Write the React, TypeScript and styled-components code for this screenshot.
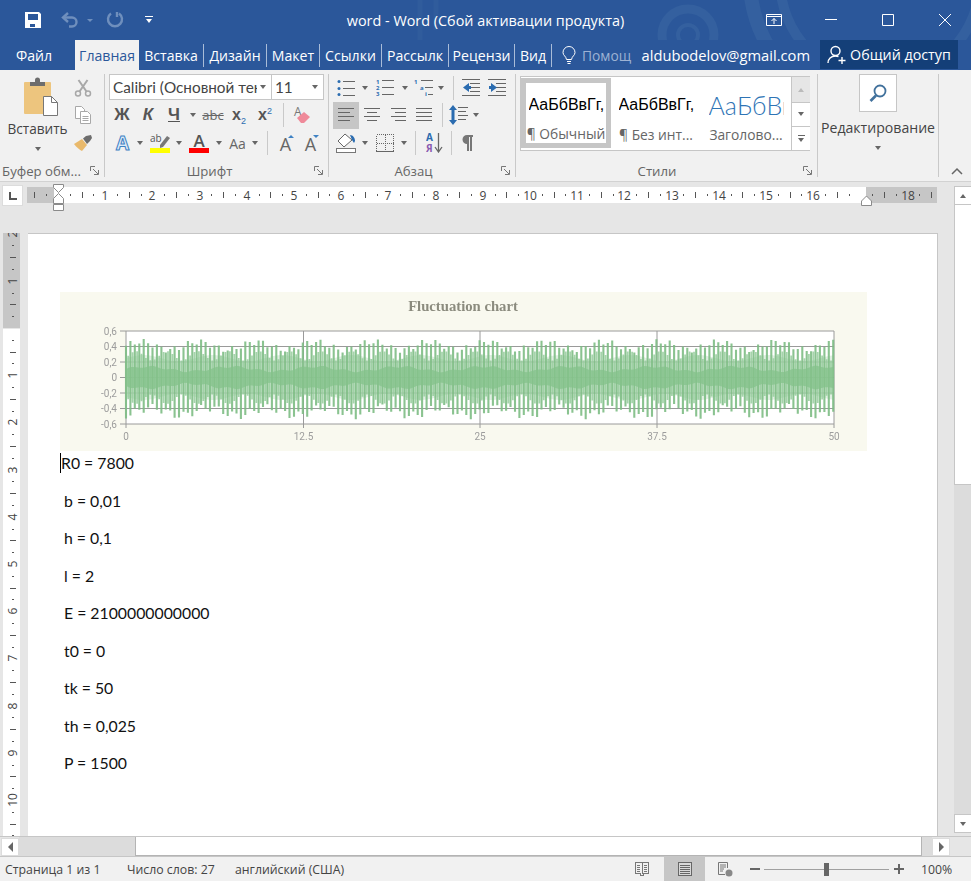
import React from 'react'
import styled, { createGlobalStyle } from 'styled-components'

const GlobalStyle = createGlobalStyle`
    html, body {
        margin: 0;
        padding: 0;
        height: 100%;
        overflow: hidden;
    }
    body {
        font-family: 'Open Sans', 'Noto Sans', sans-serif;
    }
`

const Root = styled.div`
    width: 971px;
    height: 881px;
    display: flex;
    flex-direction: column;
    overflow: hidden;
    background: #e6e6e6;
`

/* ---------- title bar ---------- */

const TitleBar = styled.div`
    position: relative;
    height: 40px;
    flex: none;
    display: grid;
    grid-template-columns: 1fr auto 1fr;
    align-items: center;
    background: #2b579a;
    color: #fff;
`
const Decoration = styled.svg`
    position: absolute;
    left: 0;
    top: 0;
    width: 971px;
    height: 70px;
    pointer-events: none;
`
const QuickBar = styled.div`
    position: relative;
    display: flex;
    align-items: center;
    padding-left: 20px;
    height: 40px;
`
const QuickCell = styled.div<{ $w: number; $ml?: number }>`
    width: ${p => p.$w}px;
    margin-left: ${p => p.$ml || 0}px;
    display: flex;
    align-items: center;
    justify-content: center;
`
const DimArrow = styled.span`
    border-left: 3px solid transparent;
    border-right: 3px solid transparent;
    border-top: 3px solid #6f8fbd;
`
const DocTitle = styled.div`
    position: relative;
    font-size: 14.4px;
    white-space: nowrap;
`
const WindowButtons = styled.div`
    position: relative;
    display: flex;
    justify-content: flex-end;
    margin-right: -2px;
`
const WindowButton = styled.div`
    width: 57px;
    height: 40px;
    display: flex;
    align-items: center;
    justify-content: center;
`

/* ---------- tabs ---------- */

const TabBar = styled.div`
    position: relative;
    height: 30px;
    flex: none;
    display: flex;
    align-items: stretch;
    background: #2b579a;
    color: #fff;
    font-size: 14.1px;
`
const Tab = styled.div<{ $w: number; $active?: boolean }>`
    position: relative;
    width: ${p => p.$w}px;
    display: flex;
    align-items: center;
    justify-content: center;
    white-space: nowrap;
    background: ${p => (p.$active ? '#f1f1f1' : 'transparent')};
    color: ${p => (p.$active ? '#2b579a' : '#fff')};
`
const TabSep = styled.div`
    position: relative;
    width: 1px;
    height: 23px;
    align-self: center;
    background: #a9bcd8;
`
const Help = styled.div`
    position: relative;
    display: flex;
    align-items: center;
    gap: 6px;
    margin-left: 10px;
    font-size: 13.8px;
    color: #9db2d3;
`
const Email = styled.div`
    position: relative;
    display: flex;
    align-items: center;
    margin-left: auto;
    margin-right: 10px;
    font-size: 14.7px;
`
const ShareButton = styled.div`
    position: relative;
    width: 138px;
    margin-right: 13px;
    margin-bottom: 1px;
    display: flex;
    align-items: center;
    justify-content: center;
    gap: 3px;
    font-size: 14.3px;
    background: #143f78;
    white-space: nowrap;
`

/* ---------- ribbon ---------- */

const Ribbon = styled.div`
    position: relative;
    height: 112px;
    flex: none;
    box-sizing: border-box;
    display: flex;
    padding: 4px 0 4px;
    background: #f1f1f1;
    border-bottom: 1px solid #d2d2d2;
    color: #444;
    font-size: 13px;
`
const Group = styled.div<{ $w: number; $pl?: number }>`
    position: relative;
    width: ${p => p.$w}px;
    box-sizing: border-box;
    display: flex;
    flex-direction: column;
    padding-left: ${p => p.$pl || 0}px;
    border-right: 1px solid #c9c9c9;
`
const GroupBody = styled.div`
    flex: 1;
    display: flex;
    min-height: 0;
`
const Rows = styled.div`
    display: flex;
    flex-direction: column;
`
const GroupLabel = styled.div<{ $pr?: number }>`
    height: 12px;
    padding-right: ${p => p.$pr || 0}px;
    display: flex;
    align-items: center;
    justify-content: center;
    font-size: 13.2px;
    color: #666;
    white-space: nowrap;
`
const Launcher = styled.svg`
    position: absolute;
    right: 5px;
    bottom: 2px;
    width: 9px;
    height: 9px;
`
const PasteColumn = styled.div`
    width: 71px;
    display: flex;
    flex-direction: column;
    align-items: center;
    padding-left: 4px;
    box-sizing: border-box;
`
const PasteGlyph = styled.div`
    display: flex;
    margin: 3px 0 0 7px;
`
const PasteText = styled.div`
    margin-top: 2px;
    font-size: 13.6px;
    color: #444;
`
const SmallColumn = styled.div`
    width: 24px;
    display: flex;
    flex-direction: column;
`
const ToolRow = styled.div<{ $h?: number; $ml?: number }>`
    height: ${p => p.$h || 28}px;
    margin-left: ${p => p.$ml || 0}px;
    display: flex;
    align-items: center;
`
const Cell = styled.div<{ $w: number; $on?: boolean }>`
    width: ${p => p.$w}px;
    height: 27px;
    flex: none;
    display: flex;
    align-items: center;
    justify-content: center;
    background: ${p => (p.$on ? '#c6c6c6' : 'transparent')};
    color: #555;
`
const Caret = styled.span<{ $mt?: number }>`
    margin-top: ${p => p.$mt || 0}px;
    border-left: 3.5px solid transparent;
    border-right: 3.5px solid transparent;
    border-top: 4px solid #666;
`
const RowSep = styled.div<{ $w: number }>`
    width: ${p => p.$w}px;
    flex: none;
    display: flex;
    justify-content: center;
    &::before {
        content: '';
        width: 1px;
        height: 24px;
        background: #c9c9c9;
    }
`
const LetterBtn = styled.span<{ $italic?: boolean; $under?: boolean }>`
    font-family: 'Liberation Sans', sans-serif;
    font-weight: 700;
    font-size: 17px;
    font-style: ${p => (p.$italic ? 'italic' : 'normal')};
    text-decoration: ${p => (p.$under ? 'underline' : 'none')};
    color: #555;
`
const StrikeText = styled.span`
    font-size: 13px;
    color: #666;
    text-decoration: line-through;
`
const ScriptX = styled.span`
    font-family: 'Liberation Sans', sans-serif;
    font-weight: 700;
    font-size: 16px;
    color: #555;
    sub, sup {
        font-size: 9px;
        font-weight: 400;
        color: #2b6cb0;
        line-height: 0;
    }
`
const CaseText = styled.span`
    font-size: 14px;
    color: #666;
`
const ComboRow = styled.div`
    display: flex;
    height: 27px;
`
const Combo = styled.div<{ $w: number }>`
    width: ${p => p.$w}px;
    box-sizing: border-box;
    height: 26px;
    display: flex;
    align-items: center;
    justify-content: space-between;
    padding: 0 5px 0 3px;
    background: #fff;
    border: 1px solid #c6c6c6;
    & + & {
        border-left-width: 0;
    }
    font-size: 15.3px;
    font-family: 'Lato', sans-serif;
    color: #444;
`
const ComboText = styled.span`
    width: 144px;
    overflow: hidden;
    white-space: nowrap;
`
const Gallery = styled.div`
    margin: 2px 0 0 3px;
    width: 290px;
    height: 75px;
    box-sizing: border-box;
    display: flex;
    background: #fff;
    border: 1px solid #c6c6c6;
`
const StyleItem = styled.div<{ $on?: boolean; $w: number }>`
    width: ${p => p.$w}px;
    flex: none;
    box-sizing: border-box;
    margin-top: 1px;
    height: ${p => (p.$on ? 70 : 72)}px;
    padding: ${p => (p.$on ? '0 2px' : '0 5px')};
    display: flex;
    flex-direction: column;
    align-items: center;
    border: ${p => (p.$on ? '5px solid #c6c6c6' : '5px solid transparent')};
`
const SampleText = styled.div<{ $big?: boolean }>`
    width: 75px;
    height: 38px;
    margin-top: 3px;
    display: flex;
    align-items: center;
    overflow: hidden;
    white-space: nowrap;
    font-family: ${p => (p.$big ? "'Lato', sans-serif" : "'Liberation Sans', sans-serif")};
    font-weight: ${p => (p.$big ? 300 : 400)};
    font-size: ${p => (p.$big ? 25 : 16)}px;
    color: ${p => (p.$big ? '#2e74b5' : '#000')};
`
const StyleName = styled.div`
    margin-top: 2px;
    font-size: 13.8px;
    line-height: 18px;
    color: #666;
    white-space: nowrap;
`
const GalleryScroll = styled.div`
    margin-left: auto;
    width: 18px;
    flex: none;
    display: flex;
    flex-direction: column;
    border-left: 1px solid #c6c6c6;
`
const GalleryButton = styled.div<{ $h: number; $dim?: boolean }>`
    height: ${p => p.$h}px;
    display: flex;
    flex-direction: column;
    gap: 2px;
    align-items: center;
    justify-content: center;
    background: ${p => (p.$dim ? '#e6e6e6' : '#fff')};
    & + & {
        border-top: 1px solid #c6c6c6;
    }
`
const UpCaret = styled.span<{ $color?: string }>`
    border-left: 3.5px solid transparent;
    border-right: 3.5px solid transparent;
    border-bottom: 4px solid ${p => p.$color || '#666'};
`
const Dash = styled.span`
    width: 7px;
    height: 1px;
    background: #666;
`
const EditColumn = styled.div`
    width: 120px;
    display: flex;
    flex-direction: column;
    align-items: center;
`
const FindButton = styled.div`
    width: 38px;
    height: 38px;
    box-sizing: border-box;
    display: flex;
    align-items: center;
    justify-content: center;
    background: #fff;
    border: 1px solid #c6c6c6;
`
const EditText = styled.div`
    margin-top: 6px;
    font-size: 14.1px;
    color: #444;
`
const Collapse = styled.svg`
    position: absolute;
    right: 8px;
    bottom: 6px;
    width: 12px;
    height: 8px;
`

/* ---------- workspace ---------- */

const Workspace = styled.div`
    flex: 1;
    min-height: 0;
    display: grid;
    grid-template-columns: 28px 910px 16px 17px;
    grid-template-rows: 51px 1fr;
    background: #e6e6e6;
`
const RulerCorner = styled.div`
    grid-column: 1;
    grid-row: 1;
    align-self: start;
    width: 21px;
    height: 21px;
    margin: 3px 0 0 2px;
    box-sizing: border-box;
    display: flex;
    align-items: center;
    justify-content: center;
    background: #fff;
    border: 1px solid #dcdcdc;
`
const TopRuler = styled.svg`
    grid-column: 2;
    grid-row: 1;
    display: block;
    margin-left: -1px;
    width: 911px;
    height: 31px;
    overflow: visible;
`
const SideRuler = styled.svg`
    grid-column: 1;
    grid-row: 2;
    display: block;
    width: 28px;
    height: 603px;
`
const Page = styled.div`
    grid-column: 2;
    grid-row: 2;
    box-sizing: border-box;
    padding: 58px 0 0 32px;
    background: #fff;
    border-top: 1px solid #c6c6c6;
    border-right: 1px solid #c6c6c6;
    overflow: hidden;
`
const Chart = styled.svg`
    display: block;
    width: 807px;
    height: 159px;
    filter: blur(0.35px);
`
const Lines = styled.div`
    margin-top: 2px;
    font-family: 'Lato', 'Carlito', sans-serif;
    font-size: 15.8px;
    color: #111;
`
const Line = styled.div<{ $first?: boolean }>`
    height: 20px;
    line-height: 20px;
    margin-bottom: 17.5px;
    padding-left: ${p => (p.$first ? 0 : 4)}px;
    ${p => (p.$first ? 'border-left: 1px solid #000;' : '')}
`
const VScroll = styled.div`
    grid-column: 4;
    grid-row: 1 / 3;
    padding: 4px 0 3px;
    display: flex;
    flex-direction: column;
`
const VButton = styled.div`
    height: 17px;
    flex: none;
    display: flex;
    align-items: center;
    justify-content: center;
    background: #fff;
    border: solid #c6c6c6;
    border-width: 1px 0 1px 1px;
`
const VThumb = styled.div`
    height: 280px;
    flex: none;
    box-sizing: border-box;
    background: #fff;
    border-left: 1px solid #c6c6c6;
    border-bottom: 1px solid #c6c6c6;
`
const VTrack = styled.div`
    flex: 1;
    background: #dcdcdc;
`

const HScroll = styled.div`
    height: 20px;
    flex: none;
    display: flex;
    align-items: stretch;
    background: #e6e6e6;
    border-top: 1px solid #c6c6c6;
    box-sizing: border-box;
`
const HButton = styled.div<{ $ml?: number }>`
    width: 18px;
    margin-left: ${p => p.$ml || 0}px;
    margin-top: 1px;
    display: flex;
    align-items: center;
    justify-content: center;
    background: #fff;
    box-shadow: 0 0 0 1px #dcdcdc inset;
`
const HTrack = styled.div<{ $w: number }>`
    width: ${p => p.$w}px;
    background: #dcdcdc;
`
const HThumb = styled.div<{ $w: number }>`
    width: ${p => p.$w}px;
    box-sizing: border-box;
    background: #fff;
    border: 1px solid #b4b4b4;
    border-top-width: 0;
`
const SideCaret = styled.span<{ $left?: boolean }>`
    border-top: 5px solid transparent;
    border-bottom: 5px solid transparent;
    ${p => (p.$left ? 'border-right: 5px solid #666;' : 'border-left: 5px solid #666;')}
`

/* ---------- status bar ---------- */

const StatusBar = styled.div`
    height: 25px;
    flex: none;
    box-sizing: border-box;
    display: flex;
    align-items: center;
    padding-left: 5px;
    background: #f1f1f1;
    border-top: 1px solid #c6c6c6;
    color: #444;
    font-size: 12.3px;
`
const StatusText = styled.span<{ $w: number }>`
    width: ${p => p.$w}px;
    flex: none;
    white-space: nowrap;
`
const ViewButton = styled.div<{ $w: number; $on?: boolean }>`
    width: ${p => p.$w}px;
    height: 100%;
    flex: none;
    display: flex;
    align-items: center;
    justify-content: center;
    background: ${p => (p.$on ? '#c6c6c6' : 'transparent')};
`
const ZoomSlider = styled.div`
    position: relative;
    width: 125px;
    height: 1px;
    margin: 0 5px 0 4px;
    flex: none;
    background: #a0a0a0;
`
const ZoomThumb = styled.div`
    position: absolute;
    left: 60px;
    top: -6px;
    width: 5px;
    height: 13px;
    background: #666;
`
const ZoomMark = styled.span<{ $plus?: boolean }>`
    position: relative;
    width: 10px;
    height: 2px;
    flex: none;
    margin-left: ${p => (p.$plus ? 0 : 5)}px;
    background: #666;
    ${p =>
        p.$plus
            ? `&::after { content: ''; position: absolute; left: 4px; top: -4px; width: 2px; height: 10px; background: #666; }`
            : ''}
`
const ZoomValue = styled.span`
    margin-left: 17px;
`

/* ---------- icons ---------- */

const Lined: React.FC<{ rows: number[][]; w?: number; step?: number; color?: string }> = ({
    rows,
    w = 18,
    step = 4,
    color = '#666',
}) => (
    <svg width={w} height={rows.length * step} shapeRendering="crispEdges">
        {rows.map((r, i) => (
            <rect key={i} x={r[0]} y={i * step + 1} width={r[1] - r[0]} height={1} fill={color} />
        ))}
    </svg>
)

const Save = () => (
    <svg width="16" height="16" viewBox="0 0 16 16">
        <path fillRule="evenodd" fill="#fff" d="M0 0h14l2 2v14H0z M3 2v6h10V2z M5 12v3h5v-3z" />
    </svg>
)
const Undo = () => (
    <svg width="18" height="16" viewBox="0 0 18 16" fill="none" stroke="#6f8fbd" strokeWidth="2.4">
        <path d="M7 1 2 5.5 7 10" />
        <path d="M3 5.5h8a4.5 4.5 0 0 1 0 9H8" />
    </svg>
)
const Redo = () => (
    <svg width="18" height="18" viewBox="0 0 18 18" fill="none" stroke="#6f8fbd" strokeWidth="2.4">
        <path d="M13 2.5a7 7 0 1 1-8 0" />
        <path d="M11 1v5" />
    </svg>
)
const Customize = () => (
    <svg width="8" height="8" viewBox="0 0 8 8" fill="#fff">
        <rect y="0" width="8" height="1" />
        <path d="M1 3h6L4 7z" />
    </svg>
)
const RibbonOptions = () => (
    <svg width="16" height="12" viewBox="0 0 16 12" fill="none" stroke="#fff">
        <path d="M.5.5h15v11H.5z" />
        <path d="M.5 2.5h15M8 10V4.5M5.5 7 8 4.5 10.5 7" />
    </svg>
)
const Minimize = () => (
    <svg width="12" height="12" stroke="#fff">
        <path d="M0 5.5h12" />
    </svg>
)
const Maximize = () => (
    <svg width="12" height="12" stroke="#fff" fill="none">
        <path d="M.5.5h11v11H.5z" />
    </svg>
)
const Close = () => (
    <svg width="12" height="12" stroke="#fff">
        <path d="M0 0l12 12M12 0 0 12" />
    </svg>
)
const Bulb = () => (
    <svg width="14" height="19" viewBox="0 0 14 19" fill="none" stroke="#fff">
        <path d="M4.5 13.5C4 10 1 9.500 1 6.500a6 6 0 0 1 12 0c0 3-3 3.500-3.500 7z" />
        <path d="M5 15.500h4M5.500 17.500h3" />
    </svg>
)
const SharePerson = () => (
    <svg width="20" height="20" viewBox="0 0 20 20" fill="none" stroke="#fff" strokeWidth="1.4">
        <circle cx="8.500" cy="6" r="4.500" />
        <path d="M1 18c0-4 3-7 7.500-7 1 0 2 .2 3 .5" />
        <path d="M15 12v7M11.500 15.500h7" />
    </svg>
)
const PasteIcon = () => (
    <svg width="36" height="40" viewBox="0 0 36 40">
        <rect x="1" y="5" width="27" height="32" rx="1" fill="#edc57e" />
        <path d="M7 9V5h5V3a2.500 2.500 0 0 1 5 0v2h5v4z" fill="#6d6d6d" />
        <path d="M20.500 19.500h8l6 6v13h-14z" fill="#fff" stroke="#777" />
        <path d="M28.500 19.500v6h6" fill="none" stroke="#777" />
    </svg>
)
const Scissors = () => (
    <svg width="18" height="18" viewBox="0 0 18 18" fill="none" stroke="#a8a8a8" strokeWidth="1.500">
        <circle cx="4" cy="14.500" r="2.500" />
        <circle cx="14" cy="14.500" r="2.500" />
        <path d="M5.500 12.500 13.500 1M12.500 12.500 4.500 1" strokeWidth="2" />
    </svg>
)
const CopyIcon = () => (
    <svg width="18" height="18" viewBox="0 0 18 18" fill="#fff" stroke="#a8a8a8">
        <path d="M1.500.5h6l3 3v9h-9z" />
        <path d="M6.500 5.500h7l3 3v9h-10z" />
        <path d="M8.500 10.500h6M8.500 12.500h6M8.500 14.500h6" fill="none" />
    </svg>
)
const Brush = () => (
    <svg width="18" height="16" viewBox="0 0 18 16">
        <path d="M0 9 8 4l5 6-5 6c-2-1-6-4-8-7z" fill="#e9b96b" />
        <path d="M9 3.500 12 1l5-1 1 3-2 3-3 3z" fill="#6d6d6d" />
    </svg>
)
const Launch = () => (
    <Launcher viewBox="0 0 9 9" fill="none" stroke="#777">
        <path d="M.5 5V.5H5" />
        <path d="M3 3l5 5M8.500 4v4.500H4" />
    </Launcher>
)
const Eraser = () => (
    <svg width="18" height="18" viewBox="0 0 18 18">
        <text x="1" y="10" fontSize="12" fontFamily="'Open Sans'" fill="#777">
            A
        </text>
        <path d="M4 12 11 6l6 5-6 6H8z" fill="#ef8a9a" />
    </svg>
)
const TextEffect = () => (
    <svg width="17" height="18" viewBox="0 0 17 18">
        <text
            x="8.500"
            y="16"
            textAnchor="middle"
            fontSize="19"
            fontWeight="700"
            fontFamily="'Open Sans'"
            fill="#dcebf8"
            stroke="#3f82c4"
            strokeWidth="1"
        >
            A
        </text>
    </svg>
)
const Highlight = () => (
    <svg width="20" height="20" viewBox="0 0 20 20">
        <text x="0" y="9" fontSize="10" fontFamily="'Open Sans'" fill="#555">
            ab
        </text>
        <path d="M10 12 17 3l3 2-7 9-3 1z" fill="#777" />
        <rect y="15" width="20" height="5" fill="#ffff00" />
    </svg>
)
const FontColor = () => (
    <svg width="20" height="20" viewBox="0 0 20 20">
        <text x="10" y="13.500" textAnchor="middle" fontSize="17" fontWeight="600" fontFamily="'Open Sans'" fill="#555">
            A
        </text>
        <rect y="15" width="20" height="5" fill="#ff0000" />
    </svg>
)
const SizedA: React.FC<{ down?: boolean }> = ({ down }) => (
    <svg width="16" height="18" viewBox="0 0 16 18">
        <text x="6.500" y="17" textAnchor="middle" fontSize="18" fontFamily="'Open Sans'" fill="#666">
            A
        </text>
        <path d={down ? 'M9 1h6l-3 3z' : 'M9 4h6l-3-3z'} fill="#3f82c4" />
    </svg>
)
const Bullets = () => (
    <svg width="18" height="16" viewBox="0 0 18 16" fill="#666" shapeRendering="crispEdges">
        <rect x="6" y="1" width="12" height="1" />
        <rect x="6" y="8" width="12" height="1" />
        <rect x="6" y="15" width="12" height="1" />
        <circle cx="2" cy="1.500" r="1.500" fill="#2b6cb0" shapeRendering="auto" />
        <circle cx="2" cy="8.500" r="1.500" fill="#2b6cb0" shapeRendering="auto" />
        <circle cx="2" cy="14.500" r="1.500" fill="#2b6cb0" shapeRendering="auto" />
    </svg>
)
const Numbered = () => (
    <svg width="19" height="17" viewBox="0 0 19 17">
        <g fill="#666">
            <rect x="6" y="1" width="12" height="1" />
            <rect x="6" y="8" width="12" height="1" />
            <rect x="6" y="15" width="12" height="1" />
        </g>
        <g fill="#2b6cb0" fontSize="6" fontWeight="700" fontFamily="'Open Sans'">
            <text x="0" y="5">
                1
            </text>
            <text x="0" y="11">
                2
            </text>
            <text x="0" y="17">
                3
            </text>
        </g>
    </svg>
)
const MultiLevel = () => (
    <svg width="20" height="17" viewBox="0 0 20 17">
        <g fill="#666">
            <rect x="7" y="1" width="12" height="1" />
            <rect x="11" y="8" width="8" height="1" />
            <rect x="14" y="15" width="5" height="1" />
        </g>
        <g fill="#2b6cb0" fontSize="6" fontWeight="700" fontFamily="'Open Sans'">
            <text x="0" y="5">
                1
            </text>
            <text x="6" y="11">
                a
            </text>
            <text x="11" y="17">
                i
            </text>
        </g>
    </svg>
)
const Indent: React.FC<{ out?: boolean }> = ({ out }) => (
    <svg width="18" height="17" viewBox="0 0 18 17">
        <g fill="#666">
            <rect x="0" y="0" width="18" height="1" />
            <rect x="8" y="4" width="10" height="1" />
            <rect x="8" y="8" width="10" height="1" />
            <rect x="8" y="12" width="10" height="1" />
            <rect x="0" y="16" width="18" height="1" />
        </g>
        <path d={out ? 'M7 4 1 8.500 7 13v-3h2V7H7z' : 'M1 7h2V4l6 4.500L3 13v-3H1z'} fill="#2b6cb0" />
    </svg>
)
const LineSpacing = () => (
    <svg width="19" height="20" viewBox="0 0 19 20">
        <path d="M4 0 8 5H5.500v10H8l-4 5-4-5h2.500V5H0z" fill="#2b6cb0" />
        <g fill="#666">
            <rect x="9" y="2" width="10" height="1" />
            <rect x="9" y="6" width="8" height="1" />
            <rect x="9" y="10" width="10" height="1" />
            <rect x="9" y="14" width="8" height="1" />
        </g>
    </svg>
)
const Shading = () => (
    <svg width="20" height="20" viewBox="0 0 20 20">
        <path d="M9 1 2 8l6 6 8-7z" fill="#fff" stroke="#666" />
        <path d="M14 2c3 0 5 3 5 6l-1 2-2-3z" fill="#2b6cb0" />
        <rect x=".5" y="15.500" width="19" height="4" fill="#fff" stroke="#777" />
    </svg>
)
const Borders = () => (
    <svg width="18" height="18" viewBox="0 0 18 18" fill="none" stroke="#666" shapeRendering="crispEdges">
        <path d="M.5.500h17v17H.5z M9 .5v17 M.5 9h17" strokeDasharray="1 1" />
        <path d="M0 17.500h18" />
    </svg>
)
const SortIcon = () => (
    <svg width="17" height="20" viewBox="0 0 17 20">
        <text x="0" y="8" fontSize="10" fontWeight="700" fontFamily="'Open Sans'" fill="#2b6cb0">
            A
        </text>
        <text x="0" y="19" fontSize="10" fontWeight="700" fontFamily="'Open Sans'" fill="#8a5bb0">
            Я
        </text>
        <path d="M12.500 0v18M9 14l3.500 5 3.500-5" fill="none" stroke="#666" strokeWidth="1.300" />
    </svg>
)
const Pilcrow = () => (
    <svg width="12" height="16" viewBox="0 0 12 16" fill="#777">
        <path d="M6 0h6v2h-1v14H9V2H8v14H6V9a4.500 4.500 0 0 1 0-9z" />
    </svg>
)
const Magnifier = () => (
    <svg width="18" height="18" viewBox="0 0 18 18" fill="none" stroke="#41719c">
        <circle cx="11" cy="7" r="5.500" strokeWidth="1.800" />
        <path d="M7 11.500 1.500 17" strokeWidth="2.600" />
    </svg>
)
const TabStop = () => (
    <svg width="8" height="8" viewBox="0 0 8 8" fill="#555">
        <path d="M0 0h2v6h6v2H0z" />
    </svg>
)
const BookIcon = () => (
    <svg width="14" height="15" viewBox="0 0 14 15" fill="none" stroke="#777" shapeRendering="crispEdges">
        <path d="M.5.5h13v11h-5v2h-3v-2h-5z M7 .5v11 M2 3h3M2 5h3M2 7h3M2 9h3M9 3h3M9 5h3M9 7h3M9 9h3" />
    </svg>
)
const PrintIcon = () => (
    <svg width="14" height="14" viewBox="0 0 14 14" fill="#d8d8d8" stroke="#666" shapeRendering="crispEdges">
        <path d="M.5.500h13v13H.5z" />
        <path d="M2 3h10M2 5h10M2 7h10M2 9h10M2 11h10" />
    </svg>
)
const WebIcon = () => (
    <svg width="15" height="15" viewBox="0 0 15 15" fill="none" stroke="#777">
        <path d="M7 12.500H.5V.5h9V6 M2 3h6M2 5h6M2 7h4M2 9h3" />
        <circle cx="11" cy="11" r="3.500" fill="#888" stroke="none" />
    </svg>
)

/* ---------- rulers and chart ---------- */

const UNIT = 47.2
const ORIGIN_X = 58
const ORIGIN_Y = 328
const ticks: number[] = Array.from({ length: 84 }, (_, i) => i - 8)

const HorizontalRuler = () => (
    <TopRuler viewBox="27 182 911 31">
        <rect x="27" y="187" width="910" height="16" fill="#c6c6c6" />
        <rect x="54" y="187" width="812" height="16" fill="#fff" />
        {ticks.map(t => {
            const x = Math.round(ORIGIN_X + (t * UNIT) / 4)
            // no mark at the page edge and none under the right indent marker
            if (x < 28 || x > 936 || t === 0 || t === 68) return null
            if (t % 4 === 0) {
                return (
                    <text key={t} x={x} y="200" textAnchor="middle" fontSize="12" fontFamily="'Open Sans'" fill="#444">
                        {Math.abs(t / 4)}
                    </text>
                )
            }
            return t % 2 === 0 ? (
                <rect key={t} x={x} y="192" width="1" height="6" fill="#555" />
            ) : (
                <rect key={t} x={x} y="194" width="1" height="2" fill="#555" />
            )
        })}
        <g fill="#fff" stroke="#8a8a8a">
            <path d="M53.500 184.500h10v3l-5 5-5-5z" />
            <path d="M58.500 193.500l5 5v5h-10v-5z" />
            <path d="M53.500 204.500h10v6h-10z" />
            <path d="M866.500 196l5 5v4.500h-10V201z" />
        </g>
    </TopRuler>
)

const VerticalRuler = () => (
    <SideRuler viewBox="0 233 28 603">
        <rect x="3" y="233" width="17" height="95" fill="#c6c6c6" />
        <rect x="3" y="329" width="17" height="507" fill="#fff" />
        {Array.from({ length: 56 }, (_, i) => i - 8).map(t => {
            const y = Math.round(ORIGIN_Y + (t * UNIT) / 4)
            if (y < 234 || y > 835 || t === 0) return null
            if (t % 4 === 0) {
                return (
                    <text
                        key={t}
                        x="0"
                        y="0"
                        transform={`translate(16.500 ${y}) rotate(-90)`}
                        textAnchor="middle"
                        fontSize="12"
                        fontFamily="'Open Sans'"
                        fill="#444"
                    >
                        {Math.abs(t / 4)}
                    </text>
                )
            }
            return t % 2 === 0 ? (
                <rect key={t} x="10" y={y} width="6" height="1" fill="#555" />
            ) : (
                <rect key={t} x="12" y={y} width="2" height="1" fill="#555" />
            )
        })}
    </SideRuler>
)

const PLOT = { left: 126, right: 834, top: 331, bottom: 424 }
const toY = (v: number) => 377.5 - v * 77.5
const BAR_STEP = 4.42

const envelope = (count: number, size: (k: number) => number) => {
    let top = ''
    let bottom = ''
    for (let k = 0; k <= count; k++) {
        const x = (PLOT.left + k * BAR_STEP).toFixed(1)
        top += `${top ? 'L' : 'M'}${x} ${toY(size(k)).toFixed(1)}`
        bottom = `L${x} ${toY(-size(k)).toFixed(1)}` + bottom
    }
    return `${top}${bottom}Z`
}

// tall bars, shorter bars between them, a pale haze and the solid band around zero
const makeWave = () => {
    let tall = ''
    let short = ''
    const count = Math.floor((PLOT.right - PLOT.left) / BAR_STEP)
    for (let k = 0; k <= count; k++) {
        const x = PLOT.left + k * BAR_STEP
        const up = 0.41 + 0.05 * Math.sin(k * 0.48) + 0.04 * Math.sin(k * 1.9)
        const down = 0.44 + 0.05 * Math.sin(k * 0.48 + 2) + 0.05 * Math.sin(k * 1.7 + 1)
        tall += `M${x.toFixed(1)} ${toY(up).toFixed(1)}V${toY(-down).toFixed(1)}`
        const mid = x + BAR_STEP / 2
        const half = 0.28 + 0.06 * Math.sin(k * 0.9)
        if (mid < PLOT.right) short += `M${mid.toFixed(1)} ${toY(half).toFixed(1)}V${toY(-half).toFixed(1)}`
    }
    return {
        tall,
        short,
        haze: envelope(count, k => 0.25 + 0.04 * Math.sin(k * 0.4)),
        band: envelope(count, k => 0.11 + 0.03 * Math.sin(k * 0.33) + 0.015 * Math.sin(k * 1.3)),
    }
}

const FluctuationChart = () => {
    const wave = React.useMemo(makeWave, [])
    const yTicks = [0.6, 0.4, 0.2, 0, -0.2, -0.4, -0.6]
    const xTicks: [number, string][] = [
        [126, '0'],
        [303.5, '12.5'],
        [480, '25'],
        [657, '37.5'],
        [834, '50'],
    ]
    return (
        <Chart viewBox="60 292 807 159">
            <rect x="60" y="292" width="807" height="159" fill="#f9f9ef" />
            <text
                x="463"
                y="311"
                textAnchor="middle"
                fontFamily="'Liberation Serif', serif"
                fontWeight="700"
                fontSize="14.700"
                fill="#8b8b7e"
            >
                Fluctuation chart
            </text>
            <rect x="126" y="331" width="708" height="93" fill="#fff" />
            <g stroke="#9a9a9a" strokeWidth="1">
                {yTicks.map(v => (
                    <line key={v} x1="120" x2="834" y1={toY(v)} y2={toY(v)} />
                ))}
                {xTicks.map(([x]) => (
                    <line key={x} x1={x} x2={x} y1="331" y2="428" />
                ))}
            </g>
            <path d={wave.haze} fill="#cbe5ce" opacity="0.6" />
            <path d={wave.short} fill="none" stroke="#90c997" strokeWidth="1.800" opacity="0.8" />
            <path d={wave.tall} fill="none" stroke="#7dbd84" strokeWidth="2.100" opacity="0.9" />
            <path d={wave.band} fill="#84c18b" opacity="0.75" />
            <g fontFamily="'Roboto', sans-serif" fontSize="10" fill="#9d9d9d">
                {yTicks.map(v => (
                    <text key={v} x="117" y={toY(v) + 3.5} textAnchor="end">
                        {String(v).replace('.', ',')}
                    </text>
                ))}
                {xTicks.map(([x, label]) => (
                    <text key={x} x={x} y="440" textAnchor="middle">
                        {label}
                    </text>
                ))}
            </g>
        </Chart>
    )
}

const params = ['b = 0,01', 'h = 0,1', 'l = 2', 'E = 2100000000000', 't0 = 0', 'tk = 50', 'th = 0,025', 'P = 1500']

const App: React.FC = () => (
    <Root>
        <GlobalStyle />
        <TitleBar>
            <Decoration viewBox="0 0 971 70" fill="none">
                <circle cx="688" cy="35" r="26" stroke="#34609f" strokeWidth="9" />
                <circle cx="688" cy="35" r="10" stroke="#34609f" strokeWidth="4" />
                <circle cx="880" cy="-20" r="130" stroke="#34609f" strokeWidth="14" />
                <circle cx="880" cy="-20" r="100" stroke="#34609f" strokeWidth="10" />
                <path d="M420 0v40M436 0v30" stroke="#305c9c" strokeWidth="5" />
            </Decoration>
            <QuickBar>
                <QuickCell $w={26}>
                    <Save />
                </QuickCell>
                <QuickCell $w={26} $ml={11}>
                    <Undo />
                </QuickCell>
                <QuickCell $w={14}>
                    <DimArrow />
                </QuickCell>
                <QuickCell $w={26} $ml={5}>
                    <Redo />
                </QuickCell>
                <QuickCell $w={16} $ml={13}>
                    <Customize />
                </QuickCell>
            </QuickBar>
            <DocTitle>word - Word (Сбой активации продукта)</DocTitle>
            <WindowButtons>
                <WindowButton>
                    <RibbonOptions />
                </WindowButton>
                <WindowButton>
                    <Minimize />
                </WindowButton>
                <WindowButton>
                    <Maximize />
                </WindowButton>
                <WindowButton>
                    <Close />
                </WindowButton>
            </WindowButtons>
        </TitleBar>

        <TabBar>
            <Tab $w={68}>Файл</Tab>
            <Tab $w={7} />
            <Tab $w={64} $active>
                Главная
            </Tab>
            <Tab $w={64}>Вставка</Tab>
            <TabSep />
            <Tab $w={62}>Дизайн</Tab>
            <TabSep />
            <Tab $w={52}>Макет</Tab>
            <TabSep />
            <Tab $w={61}>Ссылки</Tab>
            <TabSep />
            <Tab $w={66}>Рассылк</Tab>
            <TabSep />
            <Tab $w={65}>Рецензи</Tab>
            <TabSep />
            <Tab $w={36}>Вид</Tab>
            <TabSep />
            <Help>
                <Bulb />
                Помощ
            </Help>
            <Email>aldubodelov@gmail.com</Email>
            <ShareButton>
                <SharePerson />
                Общий доступ
            </ShareButton>
        </TabBar>

        <Ribbon>
            <Group $w={105}>
                <GroupBody>
                    <PasteColumn>
                        <PasteGlyph>
                            <PasteIcon />
                        </PasteGlyph>
                        <PasteText>Вставить</PasteText>
                        <Caret $mt={9} />
                    </PasteColumn>
                    <SmallColumn>
                        <ToolRow $h={27}>
                            <Cell $w={24}>
                                <Scissors />
                            </Cell>
                        </ToolRow>
                        <ToolRow>
                            <Cell $w={24}>
                                <CopyIcon />
                            </Cell>
                        </ToolRow>
                        <ToolRow>
                            <Cell $w={24}>
                                <Brush />
                            </Cell>
                        </ToolRow>
                    </SmallColumn>
                </GroupBody>
                <GroupLabel $pr={21}>Буфер обм...</GroupLabel>
                <Launch />
            </Group>

            <Group $w={224} $pl={4}>
                <GroupBody>
                    <Rows>
                        <ComboRow>
                            <Combo $w={163}>
                                <ComboText>Calibri (Основной текст)</ComboText>
                                <Caret />
                            </Combo>
                            <Combo $w={52}>
                                11
                                <Caret />
                            </Combo>
                        </ComboRow>
                        <ToolRow $ml={1}>
                            <Cell $w={24}>
                                <LetterBtn>Ж</LetterBtn>
                            </Cell>
                            <Cell $w={28}>
                                <LetterBtn $italic>К</LetterBtn>
                            </Cell>
                            <Cell $w={24}>
                                <LetterBtn $under>Ч</LetterBtn>
                            </Cell>
                            <Cell $w={14}>
                                <Caret />
                            </Cell>
                            <Cell $w={26}>
                                <StrikeText>abc</StrikeText>
                            </Cell>
                            <Cell $w={26}>
                                <ScriptX>
                                    x<sub>2</sub>
                                </ScriptX>
                            </Cell>
                            <Cell $w={26}>
                                <ScriptX>
                                    x<sup>2</sup>
                                </ScriptX>
                            </Cell>
                            <RowSep $w={10} />
                            <Cell $w={28}>
                                <Eraser />
                            </Cell>
                        </ToolRow>
                        <ToolRow $ml={1}>
                            <Cell $w={24}>
                                <TextEffect />
                            </Cell>
                            <Cell $w={12}>
                                <Caret />
                            </Cell>
                            <Cell $w={28}>
                                <Highlight />
                            </Cell>
                            <Cell $w={10}>
                                <Caret />
                            </Cell>
                            <Cell $w={30}>
                                <FontColor />
                            </Cell>
                            <Cell $w={10}>
                                <Caret />
                            </Cell>
                            <Cell $w={27}>
                                <CaseText>Aa</CaseText>
                            </Cell>
                            <Cell $w={8}>
                                <Caret />
                            </Cell>
                            <RowSep $w={16} />
                            <Cell $w={24}>
                                <SizedA />
                            </Cell>
                            <Cell $w={26}>
                                <SizedA down />
                            </Cell>
                        </ToolRow>
                    </Rows>
                </GroupBody>
                <GroupLabel $pr={18}>Шрифт</GroupLabel>
                <Launch />
            </Group>

            <Group $w={187} $pl={3}>
                <GroupBody>
                    <Rows>
                        <ToolRow $h={27}>
                            <Cell $w={28}>
                                <Bullets />
                            </Cell>
                            <Cell $w={10}>
                                <Caret />
                            </Cell>
                            <Cell $w={30}>
                                <Numbered />
                            </Cell>
                            <Cell $w={10}>
                                <Caret />
                            </Cell>
                            <Cell $w={27}>
                                <MultiLevel />
                            </Cell>
                            <Cell $w={8}>
                                <Caret />
                            </Cell>
                            <RowSep $w={16} />
                            <Cell $w={20}>
                                <Indent out />
                            </Cell>
                            <Cell $w={32}>
                                <Indent />
                            </Cell>
                        </ToolRow>
                        <ToolRow $ml={1}>
                            <Cell $w={26} $on>
                                <Lined rows={[[0, 16], [0, 12], [0, 16], [0, 12]]} w={16} />
                            </Cell>
                            <Cell $w={26}>
                                <Lined rows={[[0, 16], [3, 13], [0, 16], [3, 13]]} w={16} />
                            </Cell>
                            <Cell $w={26}>
                                <Lined rows={[[0, 15], [4, 15], [0, 15], [4, 15]]} w={15} />
                            </Cell>
                            <Cell $w={26}>
                                <Lined rows={[[0, 16], [0, 16], [0, 16], [0, 16]]} w={16} />
                            </Cell>
                            <RowSep $w={10} />
                            <Cell $w={22}>
                                <LineSpacing />
                            </Cell>
                            <Cell $w={14}>
                                <Caret />
                            </Cell>
                        </ToolRow>
                        <ToolRow>
                            <Cell $w={28}>
                                <Shading />
                            </Cell>
                            <Cell $w={10}>
                                <Caret />
                            </Cell>
                            <Cell $w={30}>
                                <Borders />
                            </Cell>
                            <Cell $w={8}>
                                <Caret />
                            </Cell>
                            <RowSep $w={14} />
                            <Cell $w={24}>
                                <SortIcon />
                            </Cell>
                            <RowSep $w={10} />
                            <Cell $w={22}>
                                <Pilcrow />
                            </Cell>
                        </ToolRow>
                    </Rows>
                </GroupBody>
                <GroupLabel $pr={20}>Абзац</GroupLabel>
                <Launch />
            </Group>

            <Group $w={302} $pl={1}>
                <GroupBody>
                    <Gallery>
                        <StyleItem $on $w={90}>
                            <SampleText>АаБбВвГг,</SampleText>
                            <StyleName>¶ Обычный</StyleName>
                        </StyleItem>
                        <StyleItem $w={90}>
                            <SampleText>АаБбВвГг,</SampleText>
                            <StyleName>¶ Без инт...</StyleName>
                        </StyleItem>
                        <StyleItem $w={90}>
                            <SampleText $big>АаБбВв</SampleText>
                            <StyleName>Заголово...</StyleName>
                        </StyleItem>
                        <GalleryScroll>
                            <GalleryButton $h={26} $dim>
                                <UpCaret $color="#bbb" />
                            </GalleryButton>
                            <GalleryButton $h={23}>
                                <Caret />
                            </GalleryButton>
                            <GalleryButton $h={24}>
                                <Dash />
                                <Caret />
                            </GalleryButton>
                        </GalleryScroll>
                    </Gallery>
                </GroupBody>
                <GroupLabel $pr={20}>Стили</GroupLabel>
                <Launch />
            </Group>

            <Group $w={121}>
                <GroupBody>
                    <EditColumn>
                        <FindButton>
                            <Magnifier />
                        </FindButton>
                        <EditText>Редактирование</EditText>
                        <Caret $mt={9} />
                    </EditColumn>
                </GroupBody>
            </Group>
            <Collapse viewBox="0 0 12 8" fill="none" stroke="#666" strokeWidth="1.500">
                <path d="M1 7l5-5 5 5" />
            </Collapse>
        </Ribbon>

        <Workspace>
            <RulerCorner>
                <TabStop />
            </RulerCorner>
            <HorizontalRuler />
            <VerticalRuler />
            <Page>
                <FluctuationChart />
                <Lines>
                    <Line $first>R0 = 7800</Line>
                    {params.map(p => (
                        <Line key={p}>{p}</Line>
                    ))}
                </Lines>
            </Page>
            <VScroll>
                <VButton>
                    <UpCaret />
                </VButton>
                <VThumb />
                <VTrack />
                <VButton>
                    <Caret />
                </VButton>
            </VScroll>
        </Workspace>
        <HScroll>
            <HButton $ml={1}>
                <SideCaret $left />
            </HButton>
            <HTrack $w={116} />
            <HThumb $w={787} />
            <HTrack $w={10} />
            <HButton>
                <SideCaret />
            </HButton>
        </HScroll>
        <StatusBar>
            <StatusText $w={122}>Страница 1 из 1</StatusText>
            <StatusText $w={108}>Число слов: 27</StatusText>
            <StatusText $w={385}>английский (США)</StatusText>
            <ViewButton $w={44}>
                <BookIcon />
            </ViewButton>
            <ViewButton $w={41} $on>
                <PrintIcon />
            </ViewButton>
            <ViewButton $w={40}>
                <WebIcon />
            </ViewButton>
            <ZoomMark />
            <ZoomSlider>
                <ZoomThumb />
            </ZoomSlider>
            <ZoomMark $plus />
            <ZoomValue>100%</ZoomValue>
        </StatusBar>
    </Root>
)

export default App
